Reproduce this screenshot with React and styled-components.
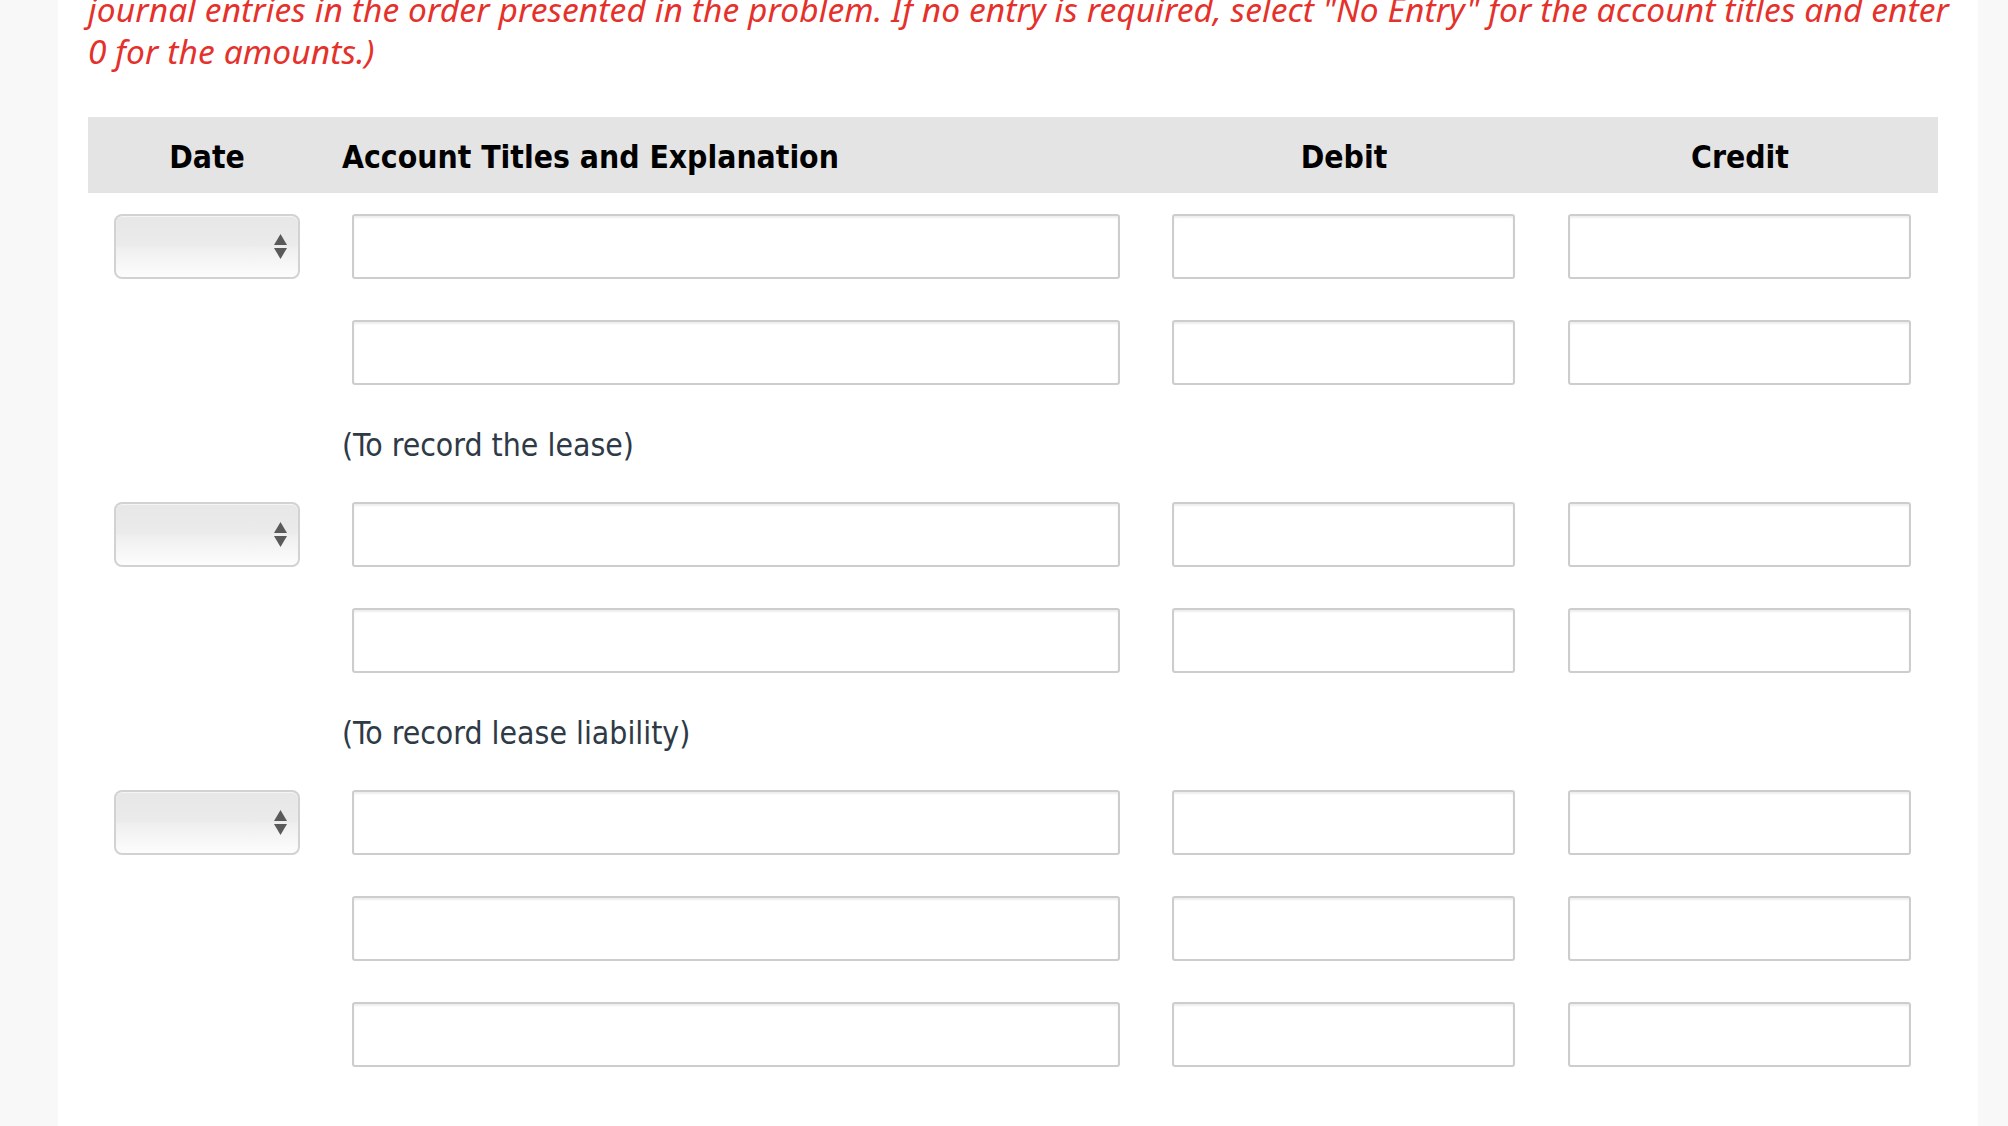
import React from "react";
import styled, { createGlobalStyle } from "styled-components";

const GlobalStyle = createGlobalStyle`
  html, body {
    margin: 0;
    padding: 0;
    background: #f8f8f8;
    overflow: hidden;
  }
  * { box-sizing: border-box; }
`;

const Page = styled.div`
  width: 2008px;
  height: 1126px;
  overflow: hidden;
  background: #f8f8f8;
  padding: 0 30px 0 58px;
`;

const Panel = styled.main`
  background: #ffffff;
  height: 100%;
  padding: 0 40px 0 30px;
  overflow: hidden;
`;

const Instructions = styled.p`
  margin: -12px 0 45px;
  color: #e5312b;
  font-family: "Noto Sans", "Open Sans", sans-serif;
  font-style: italic;
  font-size: 33.5px;
  letter-spacing: 0.1px;
  line-height: 42px;
`;

const Line = styled.span`
  display: block;
  white-space: nowrap;
`;

const Table = styled.section`
  width: 1850px;
  font-family: "DejaVu Sans Condensed", "DejaVu Sans", sans-serif;
  font-stretch: condensed;
`;

const Row = styled.div`
  display: grid;
  grid-template-columns: 238px 820px 396px 396px;
  align-items: center;
  height: ${(p) => p.$height}px;
  background: ${(p) => p.$bg || "transparent"};
`;

const HeadCell = styled.div`
  font-weight: bold;
  font-size: 31.6px;
  color: #000;
  padding-top: 4px;
  text-align: ${(p) => p.$align || "center"};
  padding-left: ${(p) => (p.$align === "left" ? "16px" : "0")};
`;

const Cell = styled.div`
  padding: 0 ${(p) => p.$right || 26}px 0 26px;
`;

const MemoText = styled.div`
  grid-column: 2 / 3;
  padding-left: 16px;
  padding-top: 4px;
  font-size: 31.7px;
  color: #2e3a46;
`;

const TextInput = styled.input`
  display: block;
  width: 100%;
  height: 65px;
  border: 2px solid #cdcdcd;
  border-radius: 3px;
  background: #fff;
  box-shadow: inset 0 2px 2px rgba(0, 0, 0, 0.07);
  outline: none;
  margin: 0;
  padding: 0 10px;
  font-family: inherit;
  font-size: 24px;
`;

const SelectBox = styled.div`
  display: flex;
  align-items: center;
  justify-content: flex-end;
  width: 100%;
  height: 65px;
  padding-right: 11px;
  border: 2px solid #d2d2d2;
  border-radius: 8px;
  background: linear-gradient(
    to bottom,
    #e7e7e7 0%,
    #ebebeb 48%,
    #efefef 52%,
    #f7f7f7 80%,
    #fdfdfd 100%
  );
  box-shadow: inset 0 1px 1px rgba(255, 255, 255, 0.6);
`;

const Arrows = () => (
  <svg width="13" height="25" viewBox="0 0 13 25">
    <polygon points="0,11 6.5,0 13,11" fill="#5a5a5a" />
    <polygon points="0,14 13,14 6.5,25" fill="#5a5a5a" />
  </svg>
);

const entries = [
  { rows: 2, memo: "(To record the lease)" },
  { rows: 2, memo: "(To record lease liability)" },
  { rows: 3, memo: null },
];

const EntryRow = ({ withDate }) => (
  <Row $height={106}>
    <Cell>{withDate ? <SelectBox><Arrows /></SelectBox> : null}</Cell>
    <Cell>
      <TextInput type="text" />
    </Cell>
    <Cell $right={27}>
      <TextInput type="text" />
    </Cell>
    <Cell $right={27}>
      <TextInput type="text" />
    </Cell>
  </Row>
);

export default function App() {
  return (
    <>
      <GlobalStyle />
      <Page>
        <Panel>
          <Instructions>
            <Line>
              journal entries in the order presented in the problem. If no entry is required, select "No Entry" for the account titles and enter
            </Line>
            <Line>0 for the amounts.)</Line>
          </Instructions>
          <Table>
            <Row $height={76} $bg="#e4e4e4">
              <HeadCell>Date</HeadCell>
              <HeadCell $align="left">Account Titles and Explanation</HeadCell>
              <HeadCell>Debit</HeadCell>
              <HeadCell>Credit</HeadCell>
            </Row>
            {entries.map((entry, i) => (
              <React.Fragment key={i}>
                {Array.from({ length: entry.rows }).map((_, r) => (
                  <EntryRow key={r} withDate={r === 0} />
                ))}
                {entry.memo && (
                  <Row $height={76}>
                    <MemoText>{entry.memo}</MemoText>
                  </Row>
                )}
              </React.Fragment>
            ))}
          </Table>
        </Panel>
      </Page>
    </>
  );
}
